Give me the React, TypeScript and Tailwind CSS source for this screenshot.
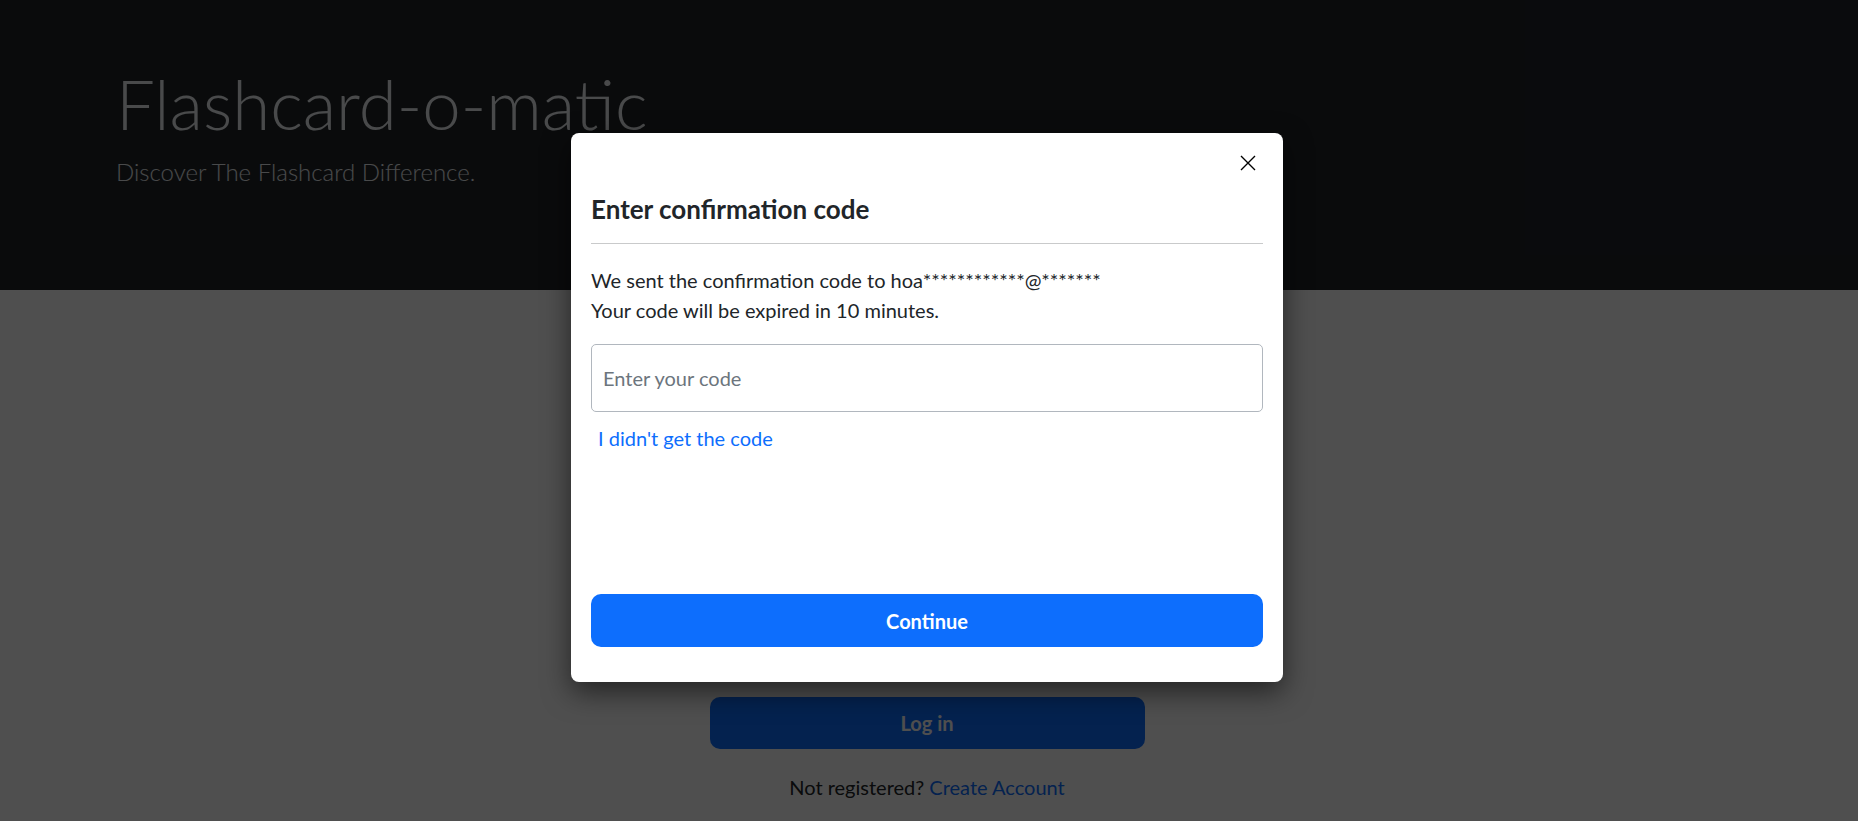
import React from "react";

// confirmation code dialog over the login page
function CloseIcon() {
  return (
    <svg width="16" height="16" viewBox="0 0 16 16" fill="none">
      <path d="M1 1L15 15M15 1L1 15" stroke="#000" strokeWidth="1.4" />
    </svg>
  );
}

export default function App() {
  return (
    <div className="relative h-[821px] overflow-hidden bg-white font-['Lato','Noto_Sans',sans-serif] text-[#212529]">
      <header className="h-[290px] bg-[#212529] pl-[116px] pt-[62px] text-[#eceff1]">
        <h1 className="text-[69px] font-light leading-[83px]">Flashcard-o-matic</h1>
        <p className="mt-[9px] text-[24px] font-light leading-[36px]">
          Discover The Flashcard Difference.
        </p>
      </header>

      <main className="flex flex-col items-center pr-[4px]">
        <button className="mt-[407px] h-[52px] w-[435px] rounded-[10px] bg-[#0d6efd] text-[20px] font-bold text-white">
          Log in
        </button>
        <p className="mt-[23px] text-[20px] leading-[30px]">
          Not registered? <a className="text-[#0d6efd]">Create Account</a>
        </p>
      </main>

      <div className="absolute inset-0 bg-black/[0.69]" />

      <div className="absolute inset-0 flex justify-center pr-[4px] pt-[133px]">
        <div className="flex h-[549px] w-[712px] flex-col rounded-[8px] bg-white px-[20px] pb-[35px] pt-[22px] shadow-[0_10px_28px_rgba(0,0,0,0.55)]">
          <div className="flex h-[16px] justify-end">
            <button className="mr-[7px] h-[16px] w-[16px]">
              <CloseIcon />
            </button>
          </div>

          <h4 className="mt-[23px] text-[26px] font-bold leading-[31px]">Enter confirmation code</h4>
          <hr className="mt-[18px] border-t border-[#c9cacb]" />

          <p className="mt-[21px] text-[20px] leading-[30px]">
            We sent the confirmation code to hoa************@*******
            <br />
            Your code will be expired in 10 minutes.
          </p>

          <input
            className="mt-[19px] h-[68px] w-full rounded-[5px] border border-[#b1b7be] px-[11px] text-[20px] outline-none placeholder:text-[#6c757d]"
            placeholder="Enter your code"
          />

          <a className="ml-[7px] mt-[11px] text-[20px] leading-[30px] text-[#0d6efd]">I didn't get the code</a>

          <div className="flex-1" />
          <button className="h-[53px] w-full rounded-[10px] bg-[#0d6efd] text-[20px] font-bold text-white">
            Continue
          </button>
        </div>
      </div>
    </div>
  );
}
